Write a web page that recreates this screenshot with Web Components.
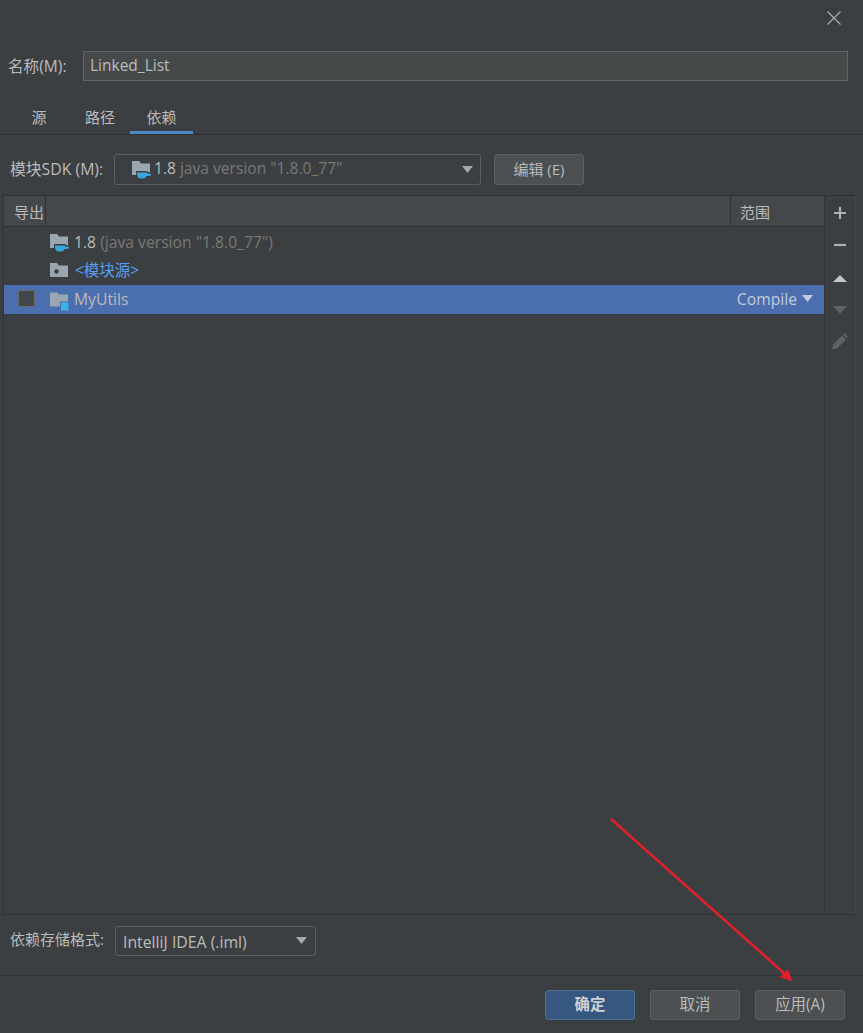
<!DOCTYPE html>
<html lang="zh">
<head>
<meta charset="utf-8">
<title>Linked_List</title>
<style>
  html, body { margin: 0; background: #3c3f41; }
  body { font: 15px "Open Sans", "Noto Sans CJK SC", sans-serif; color: #bbbbbb; }
</style>
</head>
<body>
<module-dialog>
  <form-row label="名称(M):" slot="name">
    <text-field value="Linked_List"></text-field>
  </form-row>
  <tab-bar slot="tabs" active="2">
    <span>源</span><span>路径</span><span>依赖</span>
  </tab-bar>
  <sdk-row slot="sdk"></sdk-row>
  <dep-table slot="table">
    <dep-row kind="jdk"><b>1.8</b> <i>(java version "1.8.0_77")</i></dep-row>
    <dep-row kind="source"><u>&lt;模块源&gt;</u></dep-row>
    <dep-row kind="module" selected scope="Compile">MyUtils</dep-row>
  </dep-table>
  <storage-row slot="storage"></storage-row>
  <action-button slot="actions" primary>确定</action-button>
  <action-button slot="actions">取消</action-button>
  <action-button slot="actions">应用(A)</action-button>
</module-dialog>

<script>
// shared bits
const FONT = `"Open Sans", "Noto Sans CJK SC", sans-serif`;
const CARET = `<svg width="11" height="7" viewBox="0 0 11 7"><path d="M0 0h11L5.500 7z" fill="#a5a7a8"/></svg>`;
const JDK_ICON = `<path d="M1 2h7l2 2.500h9V13h-2.500v-1H5v4H1z" fill="#9aa7b0"/><path d="M6 13.500h10v1h2.500q1.500 0 1.500 1.200t-2 1.300h-2.500q-1 2.500-3.500 2.500H9.500C7.500 19.500 6 17.500 6 15z" fill="#3aa6dc"/>`;

class ModuleDialog extends HTMLElement {
  connectedCallback() {
    const root = this.attachShadow({ mode: 'open' });
    root.innerHTML = `
      <style>
        :host { display: flex; flex-direction: column; position: relative; width: 863px; height: 1033px; background: #3c3f41; overflow: hidden; font-family: ${FONT}; color: #bbb; }
        .top { height: 51px; flex: none; }
        .close { position: absolute; left: 827px; top: 11px; }
        .body { flex: 1; display: flex; flex-direction: column; min-height: 0; }
        .footer { flex: none; height: 58px; box-sizing: border-box; border-top: 1px solid #323232; display: flex; justify-content: flex-end; gap: 15px; padding: 14px 18px 0 0; }
        .arrow { position: absolute; left: 0; top: 0; pointer-events: none; }
      </style>
      <div class="top"></div>
      <svg class="close" width="14" height="14" viewBox="0 0 14 14"><path d="M.5.5l13 13M13.500.5l-13 13" stroke="#afb1b3" stroke-width="1.100" fill="none"/></svg>
      <div class="body">
        <slot name="name"></slot>
        <slot name="tabs"></slot>
        <slot name="sdk"></slot>
        <slot name="table"></slot>
        <slot name="storage"></slot>
      </div>
      <div class="footer"><slot name="actions"></slot></div>
      <svg class="arrow" width="863" height="1033"><path d="M611 819L785 974" stroke="#e0202a" stroke-width="2.600" fill="none"/><path d="M792.500 981.500L779.500 977 788 969.500z" fill="#e0202a"/></svg>`;
  }
}

class FormRow extends HTMLElement {
  connectedCallback() {
    const root = this.attachShadow({ mode: 'open' });
    root.innerHTML = `
      <style>
        :host { display: flex; align-items: center; height: 30px; padding-left: 8px; flex: none; }
        .label { width: 75px; flex: none; font-size: 15.600px; color: #bbb; padding-bottom: 2px; }
        ::slotted(*) { flex: 1; }
      </style>
      <span class="label">${this.getAttribute('label')}</span>
      <slot></slot>`;
  }
}

class TextField extends HTMLElement {
  connectedCallback() {
    const root = this.attachShadow({ mode: 'open' });
    root.innerHTML = `
      <style>
        :host { display: block; height: 30px; box-sizing: border-box; margin-right: 15px; background: #45494a; border: 1px solid #646464; padding: 0 6px; line-height: 27px; font-size: 15.500px; color: #bbb; }
      </style>
      ${this.getAttribute('value')}`;
  }
}

class TabBar extends HTMLElement {
  connectedCallback() {
    const root = this.attachShadow({ mode: 'open' });
    root.innerHTML = `
      <style>
        :host { display: block; margin-top: 19px; height: 35px; box-sizing: border-box; border-bottom: 1px solid #323232; flex: none; }
        .tabs { display: flex; height: 34px; padding-left: 8px; }
        .tab { box-sizing: border-box; height: 34px; padding-top: 6px; text-align: center; font-size: 15px; color: #bbb; }
        .tab.on { border-bottom: 3px solid #4a88c7; }
      </style>
      <div class="tabs"></div>`;
    const tabs = root.querySelector('.tabs');
    const widths = [62, 60, 63];
    const active = Number(this.getAttribute('active'));
    [...this.children].forEach((el, i) => {
      const t = document.createElement('div');
      t.className = 'tab' + (i === active ? ' on' : '');
      t.style.width = widths[i] + 'px';
      t.textContent = el.textContent;
      tabs.appendChild(t);
    });
  }
}

class SdkRow extends HTMLElement {
  connectedCallback() {
    const root = this.attachShadow({ mode: 'open' });
    root.innerHTML = `
      <style>
        :host { display: flex; align-items: center; gap: 13px; height: 30px; margin-top: 19px; padding-left: 10px; flex: none; }
        .label { width: 104px; margin-right: -13px; flex: none; font-size: 15.800px; padding-bottom: 2px; }
        .combo { width: 367px; height: 31px; box-sizing: border-box; border: 1px solid #5e6060; border-radius: 3px; display: flex; align-items: center; padding: 0 7px 2px 16px; font-size: 15.600px; }
        .combo svg.folder { margin-right: 3px; overflow: visible; margin-top: 1px; flex: none; }
        .combo .name { color: #bbb; }
        .combo .ver { color: #787878; margin-left: 4px; }
        .caret { margin-left: auto; display: flex; padding-top: 2px; }
        .edit { box-sizing: border-box; width: 90px; height: 31px; background: #4c5052; border: 1px solid #5e6060; border-radius: 3px; text-align: center; line-height: 28px; font-size: 15px; }
      </style>
      <span class="label">模块SDK (M):</span>
      <div class="combo">
        <svg class="folder" width="20" height="19" viewBox="0 0 20 19">${JDK_ICON}</svg>
        <span class="name">1.8</span><span class="ver">java version "1.8.0_77"</span>
        <span class="caret">${CARET}</span>
      </div>
      <div class="edit">编辑 (E)</div>`;
  }
}

class DepTable extends HTMLElement {
  connectedCallback() {
    const root = this.attachShadow({ mode: 'open' });
    root.innerHTML = `
      <style>
        :host { display: flex; height: 720px; margin: 11px 7px 0 3px; border: 1px solid #323232; border-right-color: #464849; flex: none; box-sizing: border-box; }
        .main { flex: 1; display: flex; flex-direction: column; min-width: 0; border-right: 1px solid #323232; }
        .head { display: flex; height: 31px; box-sizing: border-box; background: #45484a; border-bottom: 1px solid #323232; font-size: 15px; flex: none; }
        .head div { box-sizing: border-box; line-height: 32px; }
        .export { width: 42px; padding-left: 10px; border-right: 1px solid #323232; }
        .spacer { flex: 1; border-right: 1px solid #323232; }
        .scope { width: 93px; padding-left: 9px; }
        .tools { width: 30px; flex: none; display: flex; flex-direction: column; align-items: center; padding-top: 1px; }
        .tools span { height: 32px; display: flex; justify-content: center; align-items: center; }
      </style>
      <div class="main">
        <div class="head"><div class="export">导出</div><div class="spacer"></div><div class="scope">范围</div></div>
        <div class="rows"><slot></slot></div>
      </div>
      <div class="tools">
        <span><svg width="14" height="14" viewBox="0 0 14 14"><path d="M1 7h12M7 1v12" stroke="#afb1b3" stroke-width="2.200"/></svg></span>
        <span><svg width="14" height="14" viewBox="0 0 14 14"><path d="M1 7h12" stroke="#afb1b3" stroke-width="2.200"/></svg></span>
        <span><svg width="16" height="14" viewBox="0 0 16 14"><path d="M8 5l7 7H1z" fill="#c4c6c7"/></svg></span>
        <span><svg width="16" height="14" viewBox="0 0 16 14"><path d="M1 4h14l-7 8z" fill="#5d5f60"/></svg></span>
        <span><svg width="18" height="18" viewBox="0 0 18 18"><path d="M1 17.500l1-5L11 3.500l4 4L6 16.500zM12 2.500l1.500-1.500 3.500 3.500L15.500 6z" fill="#5f6162"/></svg></span>
      </div>`;
  }
}

class DepRow extends HTMLElement {
  connectedCallback() {
    const kind = this.getAttribute('kind');
    const selected = this.hasAttribute('selected');
    const scope = this.getAttribute('scope');
    const icons = {
      jdk: JDK_ICON,
      source: `<path d="M1 2h7l2 2.500h9V16H1z" fill="#9aa7b0"/><circle cx="7.500" cy="10.500" r="2.300" fill="#3c3f41"/>`,
      module: `<path d="M1 2.500h7l2 2h9v7h-8v5H1z" fill="#9aa7b0"/><path d="M12 12.500h7.500v8H12z" fill="#38b6e8"/>`
    };
    const root = this.attachShadow({ mode: 'open' });
    root.innerHTML = `
      <style>
        :host { display: flex; align-items: center; height: 29px; box-sizing: border-box; font-size: 15.700px; color: #bbb; ${selected ? 'background: #4b6eaf;' : ''} }
        .check { width: 45px; flex: none; display: flex; padding-left: 14px; padding-bottom: 2px; box-sizing: border-box; }
        .box { width: 17px; height: 17px; box-sizing: border-box; background: #43474a; border: 1px solid #6b6b6b; border-radius: 2px; }
        svg.ic { margin-right: 5px; flex: none; overflow: visible; }
        .txt { padding-bottom: ${kind === 'jdk' ? 0 : 2}px; }
        .scope { margin-left: auto; padding: 0 11px 2px 0; display: flex; align-items: center; gap: 5px; color: #c3cbdc; }
      </style>
      <div class="check">${selected ? '<div class="box"></div>' : ''}</div>
      <svg class="ic" width="20" height="19" viewBox="0 0 20 19">${icons[kind]}</svg>
      <span class="txt"><slot></slot></span>
      ${scope ? `<span class="scope">${scope}${CARET.replace('#a5a7a8', '#c3cbdc')}</span>` : ''}`;
    // light dom text bits: style through inline rules since they sit outside the shadow
    this.querySelectorAll('b').forEach(el => { el.style.fontWeight = 'normal'; });
    this.querySelectorAll('i').forEach(el => { el.style.fontStyle = 'normal'; el.style.color = '#787878'; });
    this.querySelectorAll('u').forEach(el => { el.style.textDecoration = 'none'; el.style.color = '#589df6'; el.style.fontSize = '15.500px'; el.style.marginLeft = '1px'; });
  }
}

class StorageRow extends HTMLElement {
  connectedCallback() {
    const root = this.attachShadow({ mode: 'open' });
    root.innerHTML = `
      <style>
        :host { display: flex; align-items: flex-start; margin-top: 11px; padding-left: 10px; flex: none; height: 49px; }
        .label { width: 105px; flex: none; font-size: 15px; line-height: 27px; }
        .combo { width: 201px; height: 30px; box-sizing: border-box; border: 1px solid #5e6060; border-radius: 3px; display: flex; align-items: center; padding: 2px 8px 0 7px; font-size: 15.800px; }
        .caret { margin-left: auto; display: flex; margin-top: -3px; }
      </style>
      <span class="label">依赖存储格式:</span>
      <div class="combo">IntelliJ IDEA (.iml)<span class="caret">${CARET}</span></div>`;
  }
}

class ActionButton extends HTMLElement {
  connectedCallback() {
    const primary = this.hasAttribute('primary');
    const root = this.attachShadow({ mode: 'open' });
    root.innerHTML = `
      <style>
        :host { display: block; width: 90px; height: 30px; box-sizing: border-box; border-radius: 3px; text-align: center; line-height: 28px; font-size: 15.400px;
          background: ${primary ? '#365880' : '#4c5052'}; border: 1px solid ${primary ? '#4c708c' : '#5e6060'}; color: ${primary ? '#cfd3d6' : '#bbb'}; ${primary ? 'font-weight: 700;' : ''} }
      </style>
      <slot></slot>`;
  }
}

customElements.define('module-dialog', ModuleDialog);
customElements.define('form-row', FormRow);
customElements.define('text-field', TextField);
customElements.define('tab-bar', TabBar);
customElements.define('sdk-row', SdkRow);
customElements.define('dep-table', DepTable);
customElements.define('dep-row', DepRow);
customElements.define('storage-row', StorageRow);
customElements.define('action-button', ActionButton);
</script>
</body>
</html>
